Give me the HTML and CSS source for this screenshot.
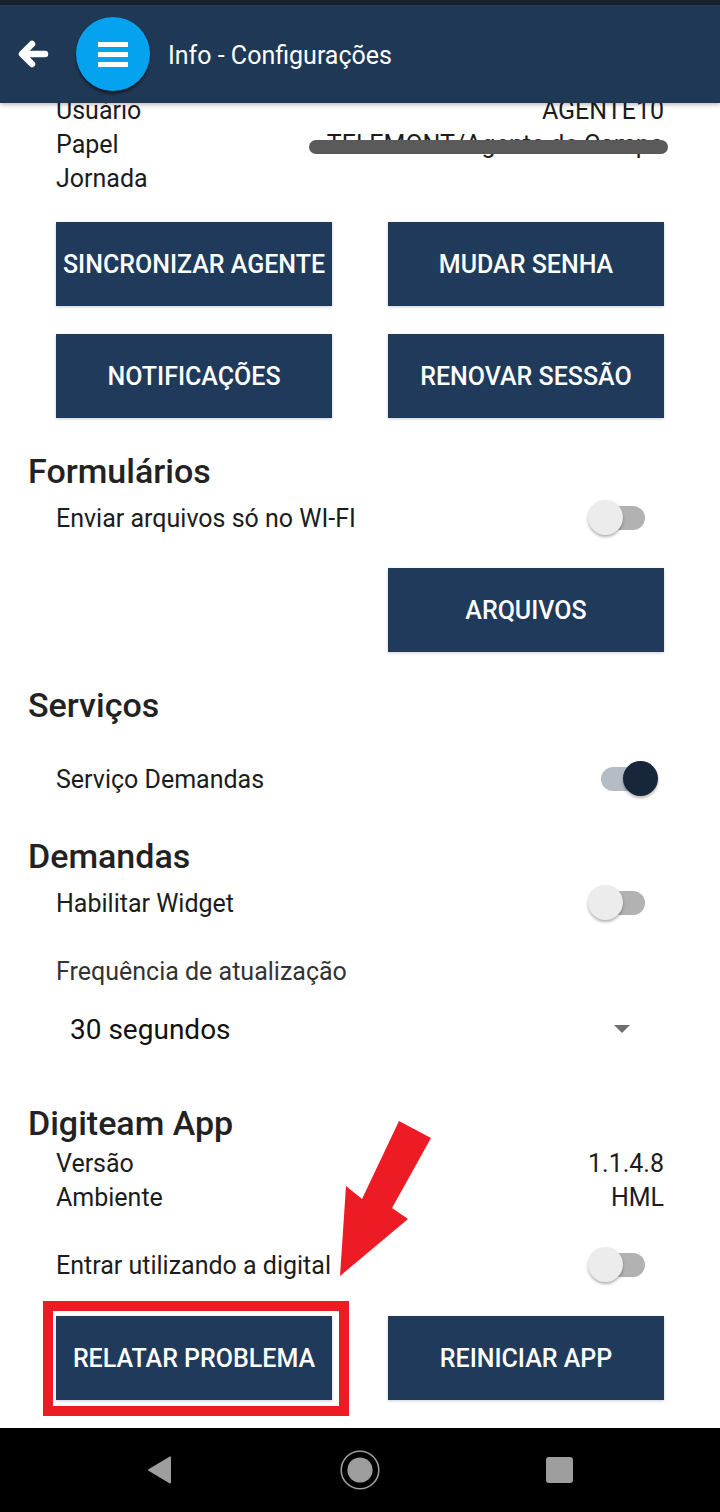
FILE: index.html
```html
<!DOCTYPE html>
<html lang="pt-BR">
<head>
  <meta charset="UTF-8" />
  <meta name="viewport" content="width=device-width, initial-scale=1.0" />
  <title>Info - Configurações</title>
  <link rel="stylesheet" href="styles.css">
</head>
<body>
  <div class="screen">
    <div class="statusbar"></div>
    <header class="appbar">
      <svg class="back" width="32" height="32" viewBox="0 0 32 32">
        <path d="M28 16H6M15 6L5 16l10 10" fill="none" stroke="#fff" stroke-width="6.5" stroke-linecap="round" stroke-linejoin="round"/>
      </svg>
      <div class="menu-btn">
        <span></span><span></span><span></span>
      </div>
      <h1 class="title">Info - Configurações</h1>
    </header>

    <main class="content">
      <div class="info first">
        <div class="row"><span>Usuário</span><span>AGENTE10</span></div>
        <div class="row"><span>Papel</span><span class="hidden-val">TELEMONT/Agente de Campo<i class="scribble"></i></span></div>
        <div class="row"><span>Jornada</span><span></span></div>
      </div>

      <div class="btn-grid top-grid">
        <div class="btn">SINCRONIZAR AGENTE</div>
        <div class="btn">MUDAR SENHA</div>
        <div class="btn">NOTIFICAÇÕES</div>
        <div class="btn">RENOVAR SESSÃO</div>
      </div>

      <h2 class="section">Formulários</h2>
      <div class="switch-row">
        <span>Enviar arquivos só no WI-FI</span>
        <div class="switch"><i class="thumb"></i></div>
      </div>
      <div class="btn-grid files-grid">
        <div></div>
        <div class="btn">ARQUIVOS</div>
      </div>

      <h2 class="section">Serviços</h2>
      <div class="switch-row services">
        <span>Serviço Demandas</span>
        <div class="switch on"><i class="thumb"></i></div>
      </div>

      <h2 class="section">Demandas</h2>
      <div class="switch-row">
        <span>Habilitar Widget</span>
        <div class="switch"><i class="thumb"></i></div>
      </div>
      <div class="label">Frequência de atualização</div>
      <div class="select">
        <span>30 segundos</span>
        <i class="caret"></i>
      </div>

      <h2 class="section app-title">Digiteam App</h2>
      <div class="info about">
        <div class="row"><span>Versão</span><span>1.1.4.8</span></div>
        <div class="row"><span>Ambiente</span><span>HML</span></div>
      </div>
      <div class="switch-row finger">
        <span>Entrar utilizando a digital</span>
        <div class="switch"><i class="thumb"></i></div>
      </div>

      <div class="btn-grid bottom-grid">
        <div class="btn marked">RELATAR PROBLEMA</div>
        <div class="btn">REINICIAR APP</div>
      </div>
    </main>

    <nav class="navbar">
      <div class="nav-cell">
        <svg width="26" height="28" viewBox="0 0 26 28"><path d="M24 1.5v25a1 1 0 0 1-1.6.8L1.5 14.8a1 1 0 0 1 0-1.6L22.4.7A1 1 0 0 1 24 1.5z" fill="#9e9e9e"/></svg>
      </div>
      <div class="nav-cell">
        <svg width="40" height="40" viewBox="0 0 40 40"><circle cx="20" cy="20" r="18.8" fill="none" stroke="#9e9e9e" stroke-width="1.6"/><circle cx="20" cy="20" r="12.6" fill="#9e9e9e"/></svg>
      </div>
      <div class="nav-cell">
        <div class="square"></div>
      </div>
    </nav>

    <svg class="pointer" width="100" height="165" viewBox="0 0 100 165">
      <polygon points="64,6 96,23 57,93 73,104 5,161 11,71 27,84" fill="#ed1c24"/>
    </svg>
  </div>
</body>
</html>
```

FILE: styles.css
```css
body {
  margin: 0;
  font-family: Roboto, "Liberation Sans", sans-serif;
  background: white;
  color: #1c1c1c;
}
.screen {
  position: relative;
  width: 720px;
  height: 1512px;
  overflow: hidden;
  display: flex;
  flex-direction: column;
}
.statusbar {
  height: 5px;
  background: #16212e;
}
.appbar {
  position: relative;
  z-index: 2;
  height: 98px;
  background: #1f3856;
  display: flex;
  align-items: center;
  box-shadow: 0 2px 4px rgba(0, 0, 0, 0.25);
}
.back {
  margin-left: 17px;
}
.menu-btn {
  width: 74px;
  height: 74px;
  margin-left: 27px;
  border-radius: 50%;
  background: #05a3ef;
  box-shadow: 0 3px 3px rgba(0, 0, 0, 0.45);
  display: flex;
  flex-direction: column;
  align-items: center;
  justify-content: center;
  gap: 5px;
}
.menu-btn span {
  width: 30px;
  height: 5px;
  background: white;
}
.title {
  margin: 2px 0 0 18px;
  font-size: 25px;
  font-weight: 400;
  color: white;
}

.content {
  flex: 1;
  padding: 0 56px 0 28px;
}
.info {
  padding-left: 28px;
}
.info.first {
  margin-top: -9px;
}
.info.about {
  margin-top: 4px;
}
.row {
  display: flex;
  justify-content: space-between;
  font-size: 25px;
  line-height: 34px;
}
.hidden-val {
  position: relative;
  white-space: nowrap;
}
.scribble {
  position: absolute;
  left: -18px;
  right: -4px;
  top: 12px;
  height: 14px;
  border-radius: 7px;
  background: #5a5a5a;
}

.btn-grid {
  display: grid;
  grid-template-columns: 1fr 1fr;
  gap: 28px 56px;
  padding-left: 28px;
}
.top-grid {
  margin-top: 26px;
}
.files-grid {
  margin-top: 26px;
}
.bottom-grid {
  margin-top: 27px;
}
.btn {
  height: 84px;
  background: #1f3a5a;
  color: white;
  font-size: 25px;
  font-weight: 500;
  display: flex;
  align-items: center;
  justify-content: center;
  box-shadow: 0 1px 3px rgba(0, 0, 0, 0.2);
  white-space: nowrap;
}
.btn.marked {
  position: relative;
}
.btn.marked::after {
  content: "";
  position: absolute;
  top: -15px;
  left: -13px;
  right: -17px;
  bottom: -16px;
  border: 10px solid #ed1c24;
}

.section {
  margin: 33px 0 0;
  font-size: 34px;
  font-weight: 500;
  line-height: 40px;
  color: #222;
}
.switch-row {
  display: flex;
  justify-content: space-between;
  align-items: center;
  height: 48px;
  margin-top: 3px;
  padding-left: 28px;
  font-size: 25px;
}
.switch-row.services {
  margin-top: 30px;
}
.switch-row.finger {
  margin-top: 26px;
}
.switch {
  position: relative;
  width: 44px;
  height: 24px;
  margin-right: 19px;
  border-radius: 12px;
  background: #b2b2b2;
}
.switch .thumb {
  position: absolute;
  top: -6px;
  left: -13px;
  width: 35px;
  height: 35px;
  border-radius: 50%;
  background: #ececec;
  box-shadow: 0 2px 3px rgba(0, 0, 0, 0.3);
}
.switch.on {
  background: #b5bcc4;
}
.switch.on .thumb {
  left: 22px;
  background: #17263a;
}

.label {
  margin-top: 28px;
  padding-left: 28px;
  font-size: 25px;
  line-height: 34px;
  color: #333;
}
.select {
  display: flex;
  justify-content: space-between;
  align-items: center;
  height: 48px;
  margin-top: 16px;
  padding-left: 42px;
  font-size: 28px;
  color: #111;
}
.caret {
  width: 0;
  height: 0;
  margin-right: 34px;
  border-left: 8px solid transparent;
  border-right: 8px solid transparent;
  border-top: 8px solid #6f6f6f;
}
.app-title {
  margin-top: 50px;
}

.navbar {
  height: 84px;
  background: black;
  display: flex;
  justify-content: center;
  align-items: center;
  padding-right: 1px;
}
.nav-cell {
  width: 200px;
  display: flex;
  justify-content: center;
  align-items: center;
}
.square {
  width: 27px;
  height: 26px;
  border-radius: 3px;
  background: #9e9e9e;
}
.pointer {
  position: absolute;
  left: 335px;
  top: 1115px;
}
```
